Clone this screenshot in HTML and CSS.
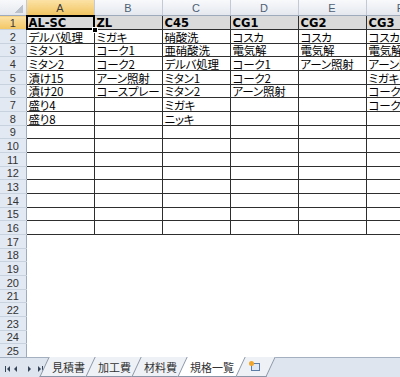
FILE: index.html
```html
<!DOCTYPE html>
<html lang="ja">
<head>
  <meta charset="UTF-8">
  <title>規格一覧</title>
  <link rel="stylesheet" href="styles.css">
</head>
<body>

<div class="book">
  <div class="viewport">
    <table class="grid">
      <colgroup>
        <col class="c-head">
        <col class="c-cell"><col class="c-cell"><col class="c-cell">
        <col class="c-cell"><col class="c-cell"><col class="c-cell">
      </colgroup>
      <thead>
        <tr>
          <th class="corner"></th>
          <th class="colhead active">A</th>
          <th class="colhead">B</th>
          <th class="colhead">C</th>
          <th class="colhead">D</th>
          <th class="colhead">E</th>
          <th class="colhead">F</th>
        </tr>
      </thead>
      <tbody>
        <tr class="ruled title"><th class="rowhead active">1</th><td class="current">AL-SC</td><td>ZL</td><td>C45</td><td>CG1</td><td>CG2</td><td>CG3</td></tr>
        <tr class="ruled"><th class="rowhead">2</th><td>デルバ処理</td><td>ミガキ</td><td>硝酸洗</td><td>コスカ</td><td>コスカ</td><td>コスカ</td></tr>
        <tr class="ruled"><th class="rowhead">3</th><td>ミタン1</td><td>コーク1</td><td>亜硝酸洗</td><td>電気解</td><td>電気解</td><td>電気解</td></tr>
        <tr class="ruled"><th class="rowhead">4</th><td>ミタン2</td><td>コーク2</td><td>デルバ処理</td><td>コーク1</td><td>アーン照射</td><td>アーン照射</td></tr>
        <tr class="ruled"><th class="rowhead">5</th><td>漬け15</td><td>アーン照射</td><td>ミタン1</td><td>コーク2</td><td></td><td>ミガキ</td></tr>
        <tr class="ruled"><th class="rowhead">6</th><td>漬け20</td><td>コースプレー</td><td>ミタン2</td><td>アーン照射</td><td></td><td>コーク1</td></tr>
        <tr class="ruled"><th class="rowhead">7</th><td>盛り4</td><td></td><td>ミガキ</td><td></td><td></td><td>コーク2</td></tr>
        <tr class="ruled"><th class="rowhead">8</th><td>盛り8</td><td></td><td>ニッキ</td><td></td><td></td><td></td></tr>
        <tr class="ruled"><th class="rowhead">9</th><td></td><td></td><td></td><td></td><td></td><td></td></tr>
        <tr class="ruled"><th class="rowhead">10</th><td></td><td></td><td></td><td></td><td></td><td></td></tr>
        <tr class="ruled"><th class="rowhead">11</th><td></td><td></td><td></td><td></td><td></td><td></td></tr>
        <tr class="ruled"><th class="rowhead">12</th><td></td><td></td><td></td><td></td><td></td><td></td></tr>
        <tr class="ruled"><th class="rowhead">13</th><td></td><td></td><td></td><td></td><td></td><td></td></tr>
        <tr class="ruled"><th class="rowhead">14</th><td></td><td></td><td></td><td></td><td></td><td></td></tr>
        <tr class="ruled"><th class="rowhead">15</th><td></td><td></td><td></td><td></td><td></td><td></td></tr>
        <tr class="ruled"><th class="rowhead">16</th><td></td><td></td><td></td><td></td><td></td><td></td></tr>
        <tr><th class="rowhead">17</th><td></td><td></td><td></td><td></td><td></td><td></td></tr>
        <tr><th class="rowhead">18</th><td></td><td></td><td></td><td></td><td></td><td></td></tr>
        <tr><th class="rowhead">19</th><td></td><td></td><td></td><td></td><td></td><td></td></tr>
        <tr><th class="rowhead">20</th><td></td><td></td><td></td><td></td><td></td><td></td></tr>
        <tr><th class="rowhead">21</th><td></td><td></td><td></td><td></td><td></td><td></td></tr>
        <tr><th class="rowhead">22</th><td></td><td></td><td></td><td></td><td></td><td></td></tr>
        <tr><th class="rowhead">23</th><td></td><td></td><td></td><td></td><td></td><td></td></tr>
        <tr><th class="rowhead">24</th><td></td><td></td><td></td><td></td><td></td><td></td></tr>
        <tr><th class="rowhead">25</th><td></td><td></td><td></td><td></td><td></td><td></td></tr>
        <tr><th class="rowhead">26</th><td></td><td></td><td></td><td></td><td></td><td></td></tr>
      </tbody>
    </table>
  </div>

  <div class="tabbar">
    <div class="nav">
      <svg width="46" height="19" viewBox="0 0 46 19">
        <g fill="#34455a">
          <rect x="5" y="8" width="1" height="6"/>
          <path d="M10 8 L7 11 L10 14 Z"/>
          <path d="M17 8 L14 11 L17 14 Z"/>
          <path d="M28 8 L31 11 L28 14 Z"/>
          <path d="M38 8 L41 11 L38 14 Z"/>
          <rect x="42" y="8" width="1" height="6"/>
        </g>
      </svg>
    </div>
    <div class="tab">見積書</div>
    <div class="tab">加工費</div>
    <div class="tab">材料費</div>
    <div class="tab active">規格一覧</div>
    <div class="tab newtab">
      <svg width="13" height="11" viewBox="0 0 13 11">
        <rect x="3.5" y="2.5" width="8" height="7" fill="#dfe8f4" stroke="#5d7da6"/>
        <circle cx="3.5" cy="2.5" r="2.5" fill="#f2a52b"/>
      </svg>
    </div>
  </div>
</div>

</body>
</html>
```

FILE: styles.css
```css
body {
  margin: 0;
  background: #fff;
  font-family: "Noto Sans CJK JP", sans-serif;
}
.book {
  width: 400px;
  height: 377px;
  overflow: hidden;
}
.viewport {
  height: 357px;
  overflow: hidden;
}
.grid {
  border-collapse: collapse;
  table-layout: fixed;
  width: 434px;
}
.c-head {
  width: 26px;
}
.c-cell {
  width: 68px;
}
thead th {
  height: 15px;
  padding: 0;
  font-family: "Liberation Sans", sans-serif;
  font-size: 11px;
  font-weight: normal;
  color: #4e5f75;
  background: linear-gradient(#f8f9fb, #e4e8ee);
  border-right: 1px solid #c3cad5;
  border-bottom: 1px solid #9eabbc;
}
.corner {
  background:
    linear-gradient(to bottom right, transparent 50%, #bcc2cb 50%) right 3px bottom 2px / 9px 9px no-repeat,
    linear-gradient(#f8f9fb, #e4e8ee);
}
.colhead.active,
.rowhead.active {
  background: linear-gradient(#fbe2a6, #f2c562);
  color: #3a3a3a;
}
tbody tr {
  height: 14px;
}
tbody tr:nth-child(3n) {
  height: 13px;
}
.rowhead {
  padding: 0;
  font-family: "Liberation Sans", sans-serif;
  font-size: 11px;
  font-weight: normal;
  line-height: 12px;
  color: #333;
  text-align: center;
  background: #e3e9f2;
  border-right: 1px solid #9eabbc;
  border-bottom: 1px solid #c8d2df;
}
td {
  padding: 0 2px;
  font-size: 11.5px;
  line-height: 12px;
  letter-spacing: -0.2px;
  color: #000;
  white-space: nowrap;
  overflow: hidden;
  vertical-align: bottom;
  font-feature-settings: "palt";
}
.ruled td {
  border: 1px solid #2e2e2e;
}
.title td {
  background: #dadada;
  font-family: "DejaVu Sans", sans-serif;
  font-size: 11.5px;
  font-weight: bold;
  letter-spacing: 0;
}
td.current {
  position: relative;
  overflow: visible;
}
td.current::after {
  content: '';
  position: absolute;
  left: -1px;
  top: -1px;
  right: -1px;
  bottom: -1px;
  border: 2px solid #000;
}
td.current::before {
  content: '';
  position: absolute;
  right: -4px;
  bottom: -4px;
  width: 4px;
  height: 4px;
  background: #000;
  border: 1px solid #fff;
  z-index: 1;
}

.tabbar {
  display: flex;
  height: 20px;
  box-sizing: border-box;
  background: #dfe5ee;
  border-top: 1px solid #a4afbf;
}
.nav {
  width: 46px;
  flex: none;
}
.nav svg {
  display: block;
}
.tab {
  position: relative;
  z-index: 0;
  padding: 0 7px 0 8px;
  margin-left: -2px;
  font-size: 11px;
  line-height: 18px;
  color: #333;
}
.tab::before {
  content: '';
  position: absolute;
  left: 0;
  top: -1px;
  right: 0;
  bottom: 0;
  z-index: -1;
  background: #eef1f5;
  border: 1px solid #8b97a8;
  border-top: none;
  transform: skewX(-25deg);
}
.tab.active {
  z-index: 1;
}
.tab.active::before {
  background: #fff;
}
.newtab {
  padding: 0 10px 0 9px;
}
.newtab svg {
  display: block;
  margin-top: 3px;
}
```
